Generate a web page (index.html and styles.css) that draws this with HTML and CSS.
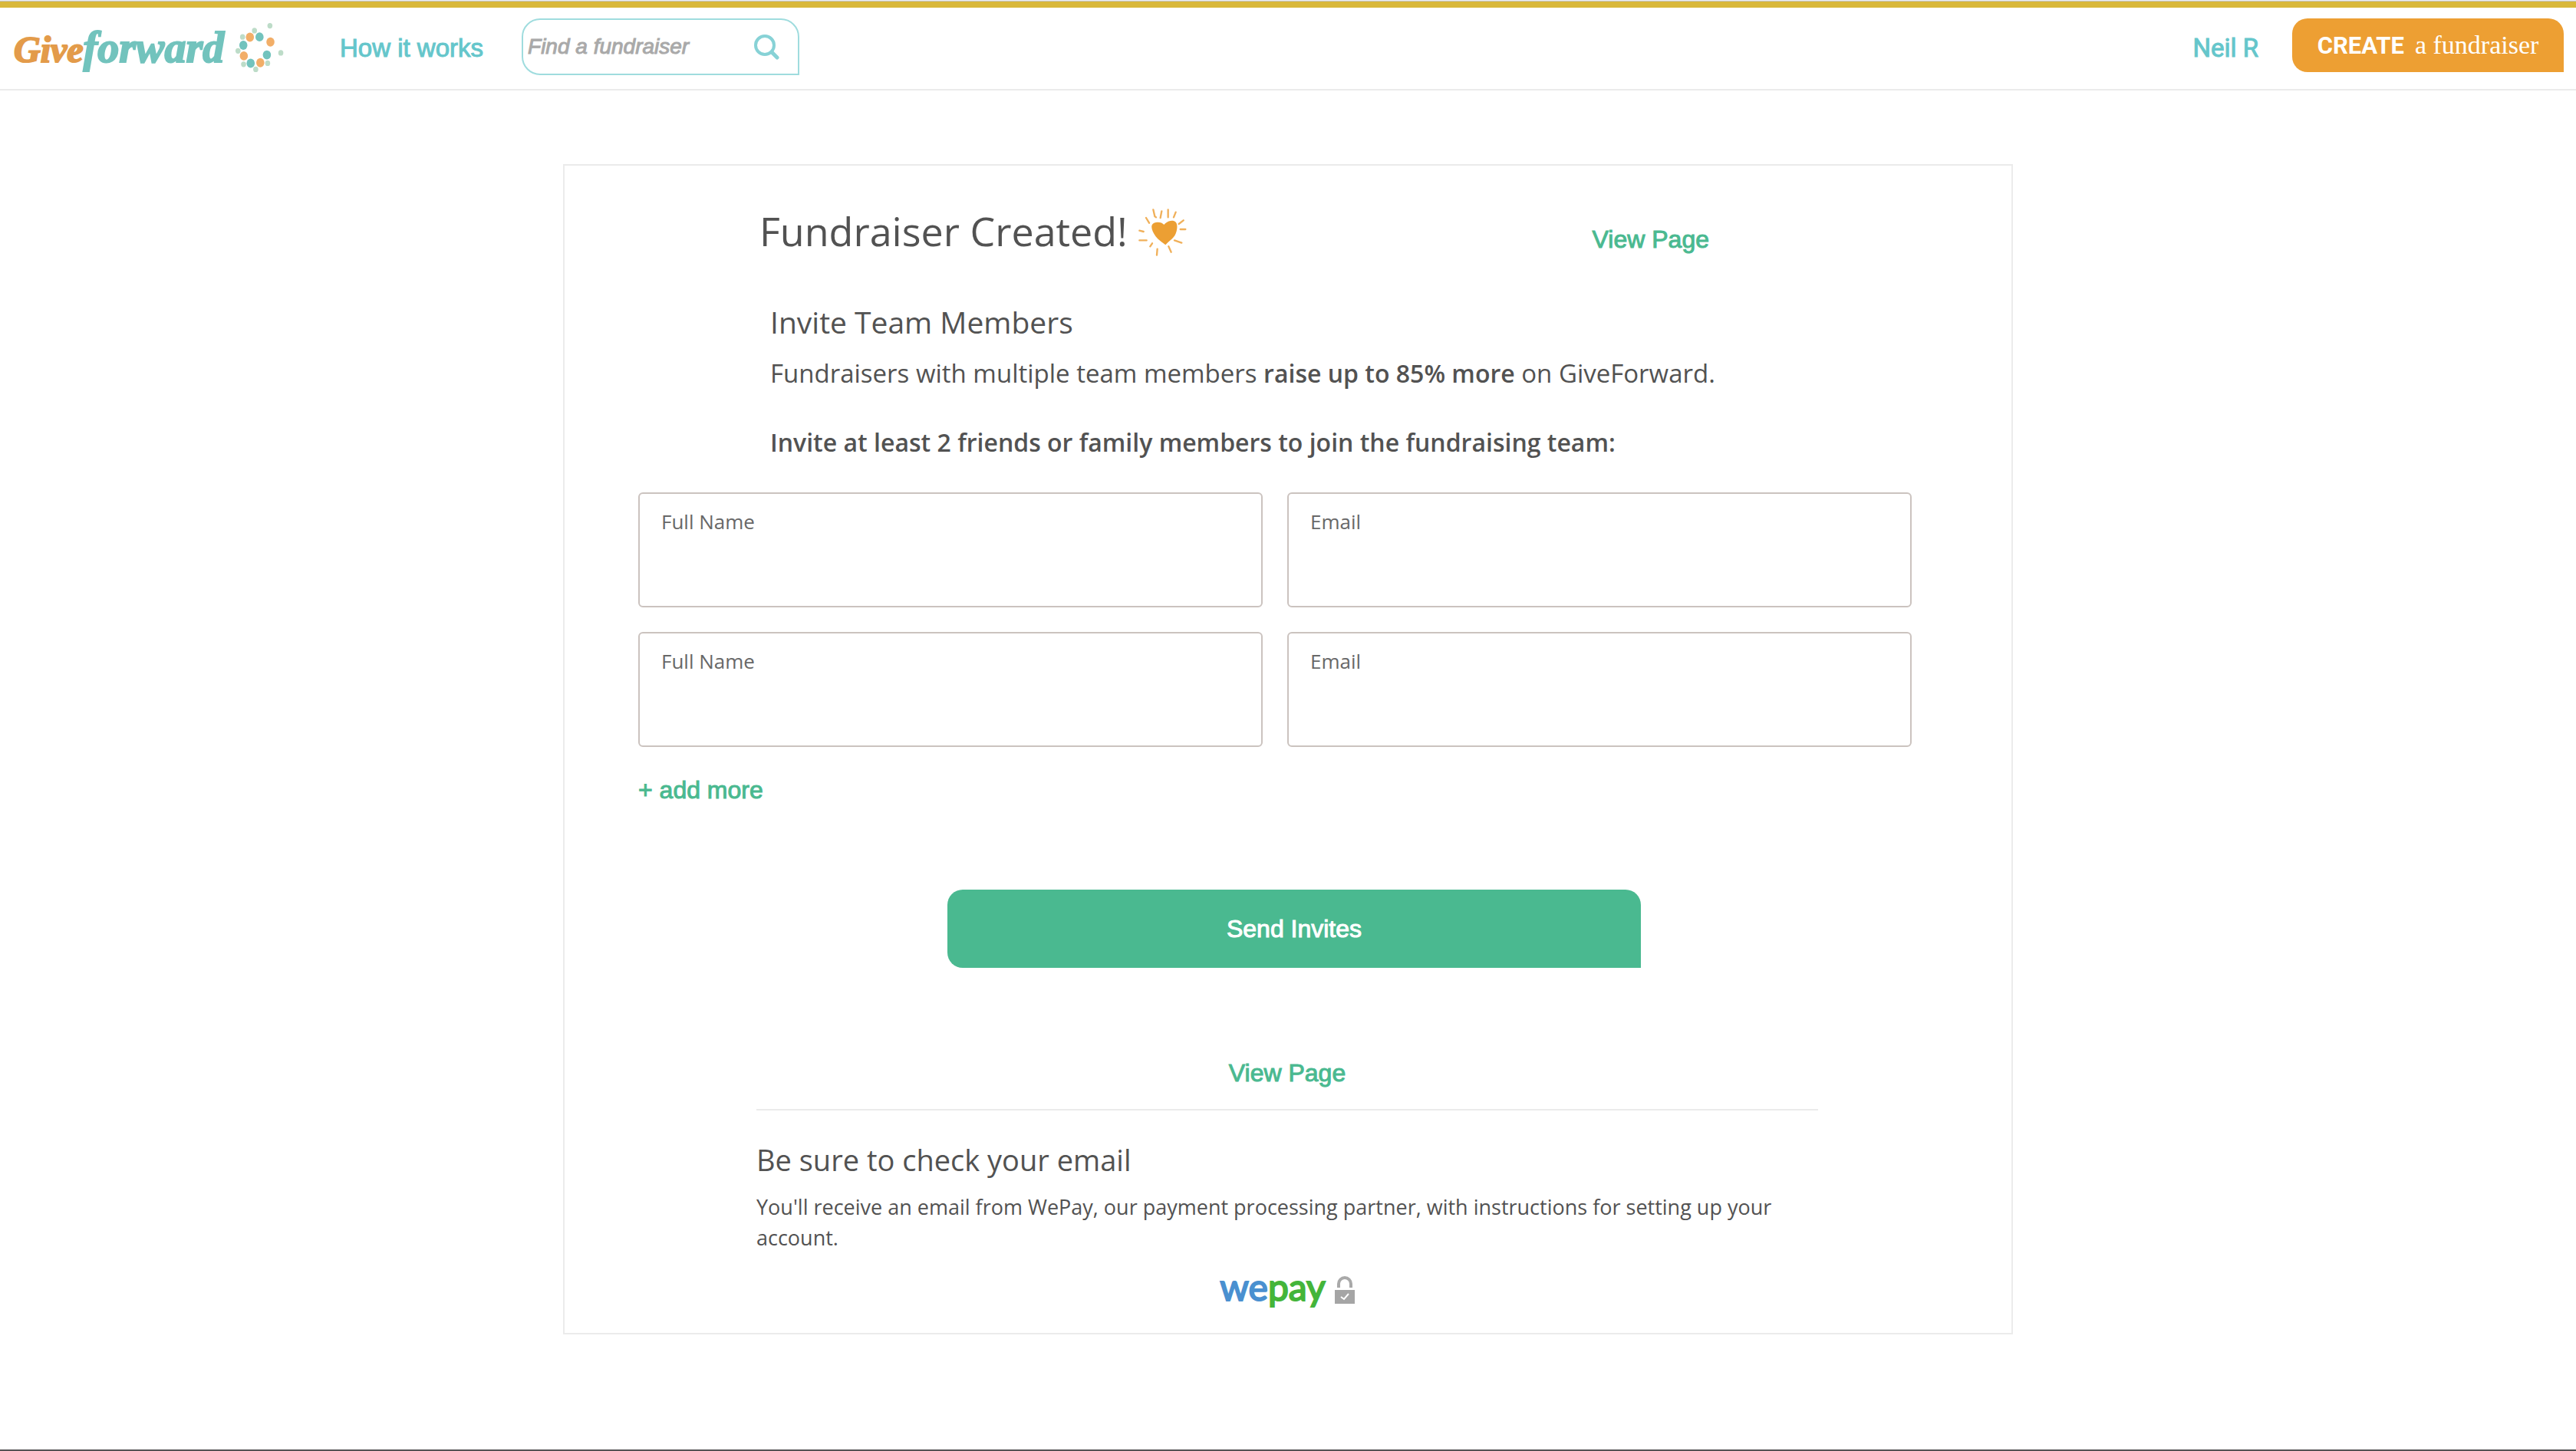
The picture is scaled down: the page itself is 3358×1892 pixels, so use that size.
FILE: index.html
```
<!DOCTYPE html>
<html lang="en">
<head>
<meta charset="utf-8">
<meta name="viewport" content="width=device-width, initial-scale=1">
<title>Fundraiser Created - GiveForward</title>
<link rel="stylesheet" href="styles.css">
</head>
<body class="page">
<div class="top-edge"></div>
<header class="header">
  <a class="logo" href="#">
    <span class="logo-give">Give</span><span class="logo-forward">forward</span>
    <svg class="logo-dots" viewBox="0 0 192 200" aria-hidden="true">
      <g fill="#bddcc8">
        <ellipse cx="138" cy="14" rx="10" ry="11"/><ellipse cx="77" cy="33" rx="10" ry="11"/>
        <ellipse cx="30" cy="58" rx="10" ry="11"/><ellipse cx="12" cy="113" rx="10" ry="11"/>
        <ellipse cx="34" cy="166" rx="10" ry="11"/><ellipse cx="82" cy="186" rx="10" ry="11"/>
        <ellipse cx="129" cy="162" rx="10" ry="11"/><ellipse cx="181" cy="121" rx="10" ry="11"/>
      </g>
      <g fill="#f2ae68">
        <ellipse cx="59" cy="59" rx="16" ry="18"/><ellipse cx="140" cy="78" rx="16" ry="18"/>
        <ellipse cx="35" cy="133" rx="16" ry="18"/><ellipse cx="100" cy="160" rx="16" ry="18"/>
      </g>
      <g fill="#72c3bd">
        <ellipse cx="97" cy="58" rx="16" ry="18"/><ellipse cx="33" cy="91" rx="16" ry="18"/>
        <ellipse cx="62" cy="162" rx="16" ry="18"/><ellipse cx="126" cy="129" rx="16" ry="18"/>
      </g>
    </svg>
  </a>
  <a class="nav-link" href="#">How it works</a>
  <form class="search" role="search">
    <input class="search-input" type="search" placeholder="Find a fundraiser" aria-label="Find a fundraiser">
    <button class="search-button" type="submit" aria-label="Search">
      <svg class="search-icon" viewBox="0 0 34 34" fill="none" stroke="#87d2d6" aria-hidden="true">
        <circle cx="15" cy="15" r="12" stroke-width="4"/>
        <path d="M24 24l7 7" stroke-width="5" stroke-linecap="round"/>
      </svg>
    </button>
  </form>
  <a class="nav-link user-link" href="#">Neil R</a>
  <a class="create" href="#"><strong class="create-strong">CREATE</strong> <span class="create-rest">a fundraiser</span></a>
</header>

<main class="card">
  <div class="title-row">
    <h1 class="title">Fundraiser Created!
      <svg class="heart" viewBox="0 0 240 222" aria-hidden="true">
        <path fill="#ec9f33" d="M78 86c8-13 38-11 46 1 10-14 32-20 44-12 12 9 8 38-2 55-9 14-25 23-36 36-10-8-30-21-39-34-10-14-20-34-13-46z"/>
        <path fill="none" stroke="#f0b05a" stroke-width="7" stroke-linecap="round" d="M82 28l6 26 5 4M115 34l-5 26M140 28v30M170 38l-8 20M54 60l12 20M200 70l-18 14M208 105h-20M28 110l16 4M28 148h28M165 148l28 10M78 160l-8 12M142 172l10 22M98 182l-2 24"/>
      </svg>
    </h1>
    <a class="link title-link" href="#">View Page</a>
  </div>

  <section class="intro">
    <h2 class="subtitle">Invite Team Members</h2>
    <p class="lead">Fundraisers with multiple team members <strong>raise up to 85% more</strong> on GiveForward.</p>
    <p class="prompt">Invite at least 2 friends or family members to join the fundraising team:</p>
  </section>

  <form class="invite">
    <div class="fields">
      <div class="field"><label for="name-1">Full Name</label><input id="name-1" type="text"></div>
      <div class="field"><label for="email-1">Email</label><input id="email-1" type="email"></div>
      <div class="field"><label for="name-2">Full Name</label><input id="name-2" type="text"></div>
      <div class="field"><label for="email-2">Email</label><input id="email-2" type="email"></div>
    </div>
    <a class="link add-more" href="#">+ add more</a>
    <button class="send" type="submit">Send Invites</button>
  </form>

  <section class="next">
    <div class="next-link"><a class="link" href="#">View Page</a></div>
    <h2 class="subtitle next-title">Be sure to check your email</h2>
    <p class="note">You'll receive an email from WePay, our payment processing partner, with instructions for setting up your account.</p>
    <div class="wepay">
      <span class="wepay-name"><span class="wepay-we">we</span><span class="wepay-pay">pay</span></span>
      <svg class="lock" viewBox="0 0 26 36" aria-hidden="true">
        <path d="M5 15v-5a8 8 0 0 1 16 0v5" fill="none" stroke="#a9a9a9" stroke-width="4"/>
        <path d="M0 18h26v18H0z" fill="#a5a5a5"/>
        <path d="M8 27l4 3 6-7" fill="none" stroke="#fff" stroke-width="2"/>
      </svg>
    </div>
  </section>
</main>
</body>
</html>
```
FILE: styles.css
```
* { box-sizing: border-box; }

.page {
  margin: 0;
  min-height: 100vh;
  background: #fff;
  border-bottom: 2px solid #555354;
  color: #525252;
  font-family: "Open Sans", "Noto Sans", sans-serif;
}

h1, h2, p { margin: 0; font-weight: 400; }
a { text-decoration: none; }

.top-edge {
  height: 2px;
  background: linear-gradient(#f0f0f0 50%, #c4c4c4 50%);
}

/* Header */
.header {
  display: flex;
  align-items: flex-start;
  height: 116px;
  padding: 14px 16px 0 18px;
  border-top: 8px solid #d9b83a;
  border-bottom: 2px solid #ebebeb;
}

.logo {
  display: flex;
  align-items: baseline;
  width: 425px;
  font: italic 700 54px/76px "Liberation Serif", serif;
}
.logo-give { color: #e39b4a; -webkit-text-stroke: 2px #e39b4a; font-size: 48px; }
.logo-forward { color: #72c3bd; -webkit-text-stroke: 2px #72c3bd; font-size: 56px; }
.logo-dots { align-self: flex-start; width: 64px; height: 66px; margin: 5px 0 0 14px; }

.nav-link {
  color: #65c6cb;
  font: 33px/78px "Liberation Sans", sans-serif;
  -webkit-text-stroke: 1px #65c6cb;
}

.search {
  display: flex;
  align-items: center;
  width: 362px;
  height: 74px;
  margin-left: 50px;
  padding: 0 24px 0 6px;
  border: 2px solid #9fdcde;
  border-radius: 24px 24px 0 24px;
}
.search-input {
  flex: 1;
  min-width: 0;
  padding: 0;
  border: 0;
  outline: 0;
  background: none;
  font: italic 28px/40px "Liberation Sans", sans-serif;
}
.search-input::placeholder { color: #a9a9a9; opacity: 1; -webkit-text-stroke: 1px #a9a9a9; }
.search-button { padding: 0; border: 0; background: none; }
.search-icon { display: block; width: 34px; height: 34px; }

.user-link { margin-left: auto; font-family: Roboto, sans-serif; }

.create {
  display: flex;
  align-items: baseline;
  justify-content: center;
  gap: 14px;
  width: 354px;
  height: 70px;
  margin-left: 44px;
  border-radius: 20px 20px 0 20px;
  background: #ed9f33;
  color: #fff;
}
.create-strong { font: 700 31px/72px Roboto, sans-serif; }
.create-rest { font: 34px/60px "Liberation Serif", serif; }

/* Card */
.card {
  max-width: 1890px;
  margin: 96px auto 0;
  padding: 48px 80px 38px 96px;
  border: 2px solid #ebebeb;
}

.title-row {
  display: flex;
  align-items: flex-start;
  justify-content: space-between;
  max-width: 1396px;
  padding-left: 158px;
}
.title {
  display: flex;
  align-items: center;
  gap: 6px;
  font-size: 52px;
  line-height: 74px;
}
.heart { width: 80px; height: 74px; }

.link {
  color: #4ab990;
  font: 32px/40px "Liberation Sans", sans-serif;
  -webkit-text-stroke: 1px #4ab990;
}
.title-link { line-height: 96px; }

.intro { padding-left: 172px; }
.subtitle { font-size: 39px; line-height: 48px; }
.intro .subtitle { margin-top: 36px; }
.lead { margin-top: 18px; font-size: 33px; line-height: 50px; }
.lead strong { font-weight: 600; font-size: 32px; }
.prompt { margin: 40px 0; font-size: 32px; line-height: 50px; font-weight: 600; }

/* Invite form */
.fields {
  display: grid;
  grid-template-columns: 1fr 1fr;
  gap: 32px;
  max-width: 1660px;
}
.field {
  display: flex;
  flex-direction: column;
  height: 150px;
  padding: 18px 28px;
  border: 2px solid #cbc3bf;
  border-radius: 6px;
}
.field label { color: #686868; font-size: 26px; line-height: 36px; }
.field input {
  flex: 1;
  min-height: 0;
  padding: 0;
  border: 0;
  outline: 0;
  background: none;
  font: inherit;
  font-size: 26px;
}

.add-more { display: inline-block; margin-top: 36px; }
.send {
  display: block;
  width: 100%;
  max-width: 904px;
  height: 102px;
  margin: 110px auto 0;
  border: 0;
  border-radius: 20px 20px 0 20px;
  background: #4ab990;
  color: #fff;
  font: 32px/40px "Liberation Sans", sans-serif;
  -webkit-text-stroke: 1px #fff;
}

/* Email reminder */
.next { max-width: 1538px; padding-left: 154px; }
.next-link {
  margin-top: 117px;
  padding-bottom: 27px;
  border-bottom: 2px solid #ebebeb;
  line-height: 40px;
  text-align: center;
}
.next-link .link { display: block; }
.next-title { margin-top: 40px; font-size: 38px; }
.note { margin-top: 18px; font-size: 27px; line-height: 40px; }

.wepay {
  display: flex;
  align-items: flex-end;
  justify-content: center;
  gap: 12px;
  margin-top: 18px;
}
.wepay-name { font: 48px/52px Lato, sans-serif; height: 48px; }
.wepay-we { color: #4a90d0; -webkit-text-stroke: 2px #4a90d0; }
.wepay-pay { color: #44b53a; -webkit-text-stroke: 2px #44b53a; }
.lock { width: 26px; height: 36px; }
```
